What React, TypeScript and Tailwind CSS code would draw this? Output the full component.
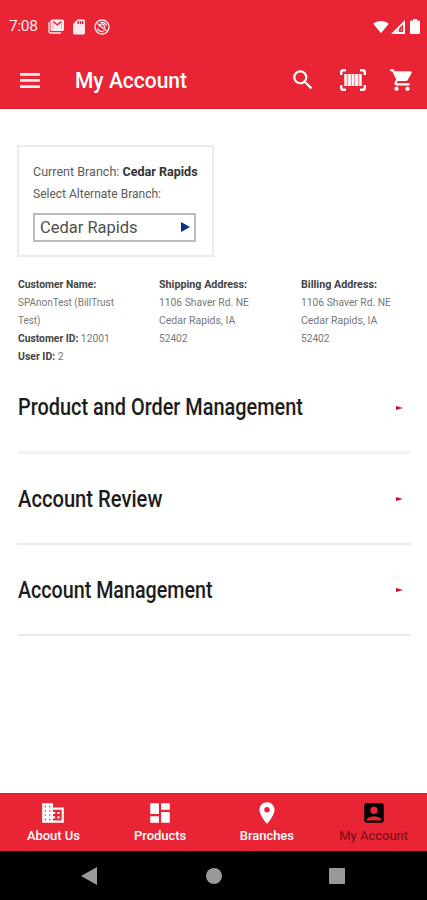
import React from "react";
import {
    MdAccountBox,
    MdDashboard,
    MdLocationOn,
    MdSdCard,
    MdSearch,
    MdShoppingCart,
    MdSignalWifi4Bar,
} from "react-icons/md";

interface LineProps {
    children: React.ReactNode;
    className?: string;
}

// one line of narrow text, squeezed from its left edge
const Line: React.FC<LineProps> = ({ children, className = "" }) => (
    <div className={`w-max origin-left whitespace-nowrap ${className}`}>{children}</div>
)

const MailIcon = () => (
    <svg width="16" height="15" viewBox="0 0 16 15" fill="none">
        <path d="M1 3v9.5a1.5 1.5 0 0 0 1.5 1.5H13" stroke="#fdeaec" strokeWidth="1.3" />
        <path d="M4 .5h10.5A1.5 1.5 0 0 1 16 2v8.5a1.5 1.5 0 0 1-1.5 1.5H4a1.5 1.5 0 0 1-1.5-1.5V2A1.5 1.5 0 0 1 4 .5z" fill="#fdeaec" />
        <path d="M5.3 2.5l4 3.3 4-3.3" stroke="#e92434" strokeWidth="1.4" />
        <path d="M5 10V3M13.5 10V3" stroke="#e92434" strokeWidth=".6" opacity=".6" />
    </svg>
)

const SyncIcon = () => (
    <svg width="16" height="16" viewBox="0 0 16 16" fill="none" stroke="#fdeaec">
        <circle cx="8" cy="8" r="7" strokeWidth="1.4" />
        <path d="M3.5 9.5a4.6 4.6 0 0 0 6 2.7M12.5 6.5a4.6 4.6 0 0 0-6-2.7M3.5 4.5l9 7.5" strokeWidth="1.5" />
        <path d="M5 7.5a3 3 0 0 1 5-1.5l1 3.5" strokeWidth="1.2" />
    </svg>
)

const SignalIcon = () => (
    <svg width="14" height="14" viewBox="0 0 14 14">
        <path d="M14 0v14H0z" fill="#fff" />
        <path d="M12 4.5v7.5H8V8.5z" fill="#e92434" />
        <path d="M7.5 8.5v3.5H4.5z" fill="#e92434" opacity=".3" />
        <path d="M11 7v4H9.5z" fill="#fff" opacity=".6" />
    </svg>
)

const BatteryIcon = () => (
    <svg width="10" height="15" viewBox="0 0 10 15">
        <path d="M3 0h4v1.5h1.8A1.2 1.2 0 0 1 10 2.7v11.1a1.2 1.2 0 0 1-1.2 1.2H1.2A1.2 1.2 0 0 1 0 13.8V2.7a1.2 1.2 0 0 1 1.2-1.2H3z" fill="#fff" />
    </svg>
)

const MenuIcon = () => (
    <svg width="20" height="15" viewBox="0 0 20 15" fill="#fdeaec">
        <path d="M0 0h20v2.7H0zM0 6.1h20v2.7H0zM0 12.200h20v2.700H0z" />
    </svg>
)

const BarcodeIcon = () => (
    <svg width="26" height="22" viewBox="0 0 26 22" fill="none" stroke="#fff">
        <path d="M1.2 6V3a2 2 0 0 1 2-1.8H6M20 1.2h2.8a2 2 0 0 1 2 1.8v3M24.8 16v3a2 2 0 0 1-2 1.8H20M6 20.8H3.2a2 2 0 0 1-2-1.8v-3" strokeWidth="2.4" />
        <path d="M5.5 5v12M20.5 5v12" strokeWidth="2.2" />
        <path d="M9.5 5v12M16.5 5v12" strokeWidth="2.4" />
        <path d="M13 5v12" strokeWidth="1.8" />
        <path d="M4.5 5h17v12h-17z" fill="#fff" fillOpacity=".5" stroke="none" />
    </svg>
)

const OfficeIcon = () => (
    <svg width="26" height="26" viewBox="0 0 24 24">
        <path d="M2 3h10v4h10v14H2z" fill="#fff" />
        <path d="M12 9h8v10h-8v-2h2v-2h-2v-2h2v-2h-2z" fill="#e92434" />
        <path d="M16 11h2v2h-2zM16 15h2v2h-2z" fill="#fff" />
        <path d="M4.400 5.400h1.200v1.200H4.400zM8.400 5.400h1.200v1.200H8.400zM4.400 9.400h1.200v1.200H4.400zM8.400 9.400h1.200v1.200H8.400zM4.400 13.400h1.200v1.200H4.400zM8.400 13.400h1.200v1.200H8.400zM4.400 17.400h1.200v1.200H4.400zM8.400 17.400h1.200v1.200H8.400z" fill="#e92434" />
    </svg>
)

const addresses = [
    { title: "Shipping Address:", street: "1106 Shaver Rd. NE", city: "Cedar Rapids, IA", zip: "52402" },
    { title: "Billing Address:", street: "1106 Shaver Rd. NE", city: "Cedar Rapids, IA", zip: "52402" },
]

const sections = [
    { title: "Product and Order Management", fit: "scale-x-[0.865]" },
    { title: "Account Review", fit: "scale-x-[0.877]" },
    { title: "Account Management", fit: "scale-x-[0.856]" },
]

const tabs = [
    { label: "About Us", icon: OfficeIcon },
    { label: "Products", icon: MdDashboard },
    { label: "Branches", icon: MdLocationOn },
    { label: "My Account", icon: MdAccountBox, active: true },
]

const Header = () => (
    <header className="h-[109px] border-b border-[#d81f2e] bg-[#e92434] text-white">
        <div className="flex h-[52px] items-center pl-[9px] pr-[7px] pt-px text-[#fdeaec]">
            <span className="w-[39px] pt-px text-[15.5px] tracking-[-0.3px]">7:08</span>
            <MailIcon />
            <MdSdCard size={18} className="ml-[6px]" />
            <span className="ml-[6px]"><SyncIcon /></span>
            <div className="ml-auto flex items-center text-white">
                <MdSignalWifi4Bar size={16} />
                <span className="ml-[2px]"><SignalIcon /></span>
                <span className="ml-[5px]"><BatteryIcon /></span>
            </div>
        </div>
        <div className="flex h-[56px] items-center pl-5 pr-3">
            <MenuIcon />
            <h1 className="ml-[35px] pt-px text-[22px] font-medium">
                <Line className="scale-x-[0.955]">My Account</Line>
            </h1>
            <MdSearch size={26} className="ml-auto" />
            <span className="ml-[24px]"><BarcodeIcon /></span>
            <MdShoppingCart size={26} className="ml-[23px]" />
        </div>
    </header>
)

const BranchBox = () => (
    <section className="ml-[17px] mt-9 h-[112px] w-[196.5px] border-2 border-[#ebebeb] px-3.5 pt-[14px] text-[13px] leading-[22px] text-[#5c5c5c]">
        <Line className="scale-x-[0.965]">
            Current Branch: <b className="font-bold text-[#333]">Cedar Rapids</b>
        </Line>
        <Line className="scale-x-[0.925]">Select Alternate Branch:</Line>
        <div className="mt-[8px] flex h-[29px] w-[163px] items-center justify-between border-2 border-[#bcbcbc] pb-px pl-[5px] pr-[4px]">
            <Line className="scale-x-[0.97] text-[17px] text-[#505050]">Cedar Rapids</Line>
            <svg width="9" height="10" viewBox="0 0 9 10"><path d="M0 0l9 5-9 5z" fill="#0b2f8a" /></svg>
        </div>
    </section>
)

const Details = () => (
    <section className="ml-[17.5px] mt-[19px] grid h-[87px] grid-cols-[141.5px_141.5px_1fr] text-[11px] leading-[18px] text-[#777]">
        <div>
            <Line className="scale-x-[0.94] font-bold text-[#444]">Customer Name:</Line>
            <Line className="scale-x-[0.905]">SPAnonTest (BillTrust</Line>
            <Line className="scale-x-[0.9]">Test)</Line>
            <Line className="scale-x-[0.935]"><b className="font-bold text-[#444]">Customer ID:</b> 12001</Line>
            <Line className="scale-x-[0.95]"><b className="font-bold text-[#444]">User ID:</b> 2</Line>
        </div>
        {addresses.map(({ title, street, city, zip }) => (
            <div key={title}>
                <Line className="scale-x-[0.975] font-bold text-[#444]">{title}</Line>
                <Line className="scale-x-[0.935]">{street}</Line>
                <Line className="scale-x-[0.95]">{city}</Line>
                <Line className="scale-x-[0.92]">{zip}</Line>
            </div>
        ))}
    </section>
)

export default function App() {
    return (
        <div className="flex h-[900px] w-[427px] flex-col overflow-hidden bg-white font-['Roboto',sans-serif]">
            <Header />
            <main className="flex-1">
                <BranchBox />
                <Details />
                <div className="ml-[18px] mr-4">
                    {sections.map(({ title, fit }) => (
                        <div key={title} className="flex h-[91px] items-center justify-between border-b-2 border-[#ebebeb] pr-[8px] pt-px first:border-b-3 first:border-[#f2f2f2]">
                            <h2 className="pt-[2px] text-[23px] font-medium text-[#1c1c1c]">
                                <Line className={fit}>{title}</Line>
                            </h2>
                            <svg width="7" height="4" viewBox="0 0 7 4"><path d="M0 0l7 2-7 2z" fill="#d90d20" /></svg>
                        </div>
                    ))}
                </div>
            </main>
            <nav className="grid h-[58px] grid-cols-4 border-t border-[#d81f2e] bg-[#e92434]">
                {tabs.map(({ label, icon: Icon, active }) => (
                    <div key={label} className={`flex flex-col items-center pt-[6px] ${active ? "text-black" : "text-white"}`}>
                        <Icon size={26} />
                        <span className={`mt-px text-[13px] leading-[18px] ${active ? "text-[#6d101b]" : "font-medium tracking-[-0.05px]"}`}>{label}</span>
                    </div>
                ))}
            </nav>
            <footer className="flex h-[49px] items-center bg-black pl-[81px]">
                <svg width="16" height="18" viewBox="0 0 16 18"><path d="M16 0v18L0 9z" fill="#999" /></svg>
                <span className="ml-[109px] size-4 rounded-full bg-[#999]" />
                <span className="ml-[107px] size-4 rounded-[1px] bg-[#999]" />
            </footer>
        </div>
    )
}
